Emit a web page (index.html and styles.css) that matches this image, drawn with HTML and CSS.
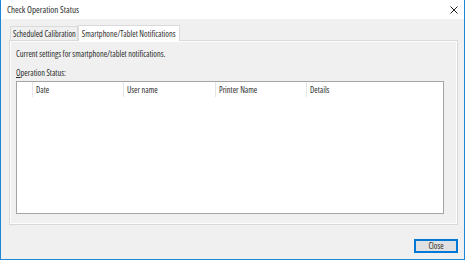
FILE: index.html
```html
<!DOCTYPE html>
<html>
  <head>
    <title>Check Operation Status</title>
    <link rel="stylesheet" href="styles.css">
  </head>
  <body>
    <div class="window">
      <div class="titlebar">
        <span class="title">Check Operation Status</span>
        <svg class="close-x" width="8" height="8" viewBox="0 0 8 8">
          <path d="M0.5 0.5 L7.5 7.5 M7.5 0.5 L0.5 7.5" stroke="#222" stroke-width="1" fill="none"/>
        </svg>
      </div>

      <div class="client">
        <div class="tabs">
          <div class="tab">Scheduled Calibration</div>
          <div class="tab active">Smartphone/Tablet Notifications</div>
        </div>

        <div class="panel">
          <p class="note">Current settings for smartphone/tablet notifications.</p>
          <p class="label"><u>O</u>peration Status:</p>

          <div class="list">
            <div class="list-head">
              <div class="col col-icon"></div>
              <div class="col col-date">Date</div>
              <div class="col col-user">User name</div>
              <div class="col col-printer">Printer Name</div>
              <div class="col col-last">Details</div>
            </div>
          </div>
        </div>

        <div class="buttons">
          <button class="btn default">Close</button>
        </div>
      </div>
    </div>
  </body>
</html>
```

FILE: styles.css
```css
html, body{
  margin: 0;
  padding: 0;
}
body{
  width: 465px;
  height: 261px;
  font-family: "Open Sans", "Liberation Sans", sans-serif;
  font-size: 8.3px;
  font-weight: 400;
  font-stretch: 75%;
  color: #2a2a2a;
  background: #fff;
}

.window{
  box-sizing: border-box;
  width: 465px;
  height: 260px;
  border: 1px solid #1c86d8;
  border-top: none;
  display: flex;
  flex-direction: column;
}

/**** title bar ****/
.titlebar{
  height: 19px;
  background: #fff;
  display: flex;
  align-items: center;
  padding: 0 5px 0 6px;
}
.title{
  flex: 1;
  font-size: 9px;
}
.close-x{
  display: block;
  margin-right: 1px;
}

/**** client area ****/
.client{
  flex: 1;
  background: #f0f0f0;
  padding: 6px 6px 6px 8px;
  display: flex;
  flex-direction: column;
}

.tabs{
  display: flex;
  height: 15px;
  align-items: flex-end;
  padding-left: 1px;
}
.tab{
  height: 13px;
  line-height: 13px;
  padding: 0 1px 0 2px;
  border: 1px solid #dadada;
  border-bottom: none;
  background: #f0f0f0;
}
.tab.active{
  height: 15px;
  line-height: 15px;
  background: #fff;
  margin-bottom: -1px;
  position: relative;
  z-index: 1;
  padding: 0 3px;
}

.panel{
  height: 185px;
  box-sizing: border-box;
  border: 1px solid #d9d9d9;
  box-shadow: inset 0 0 0 1px #fdfdfd;
  padding: 0 13px 0 6px;
  display: flex;
  flex-direction: column;
}
.note{
  margin: 7px 0 0 0;
  height: 12px;
  line-height: 12px;
}
.label{
  margin: 7px 0 0 0;
  height: 12px;
  line-height: 12px;
}
.label u{
  text-decoration-thickness: 1px;
}

.list{
  margin-top: 2px;
  height: 133px;
  box-sizing: border-box;
  border: 1px solid #a5a5a5;
  background: #fff;
}
.list-head{
  display: flex;
  height: 15px;
  line-height: 15px;
}
.col{
  box-sizing: border-box;
  padding-left: 3px;
  border-right: 1px solid #e5e5e5;
}
.col-icon{
  width: 16px;
  padding: 0;
}
.col-date{
  width: 91px;
}
.col-user{
  width: 92px;
}
.col-printer{
  width: 91px;
}
.col-last{
  border-right: none;
}

/**** buttons ****/
.buttons{
  margin-top: auto;
  display: flex;
  justify-content: flex-end;
}
.btn{
  width: 44px;
  height: 14px;
  padding: 0;
  font: inherit;
  color: #2a2a2a;
  background: #e1e1e1;
  border: 1px solid #adadad;
  border-radius: 0;
}
.btn.default{
  border: 2px solid #0078d7;
  line-height: 10px;
}
```
